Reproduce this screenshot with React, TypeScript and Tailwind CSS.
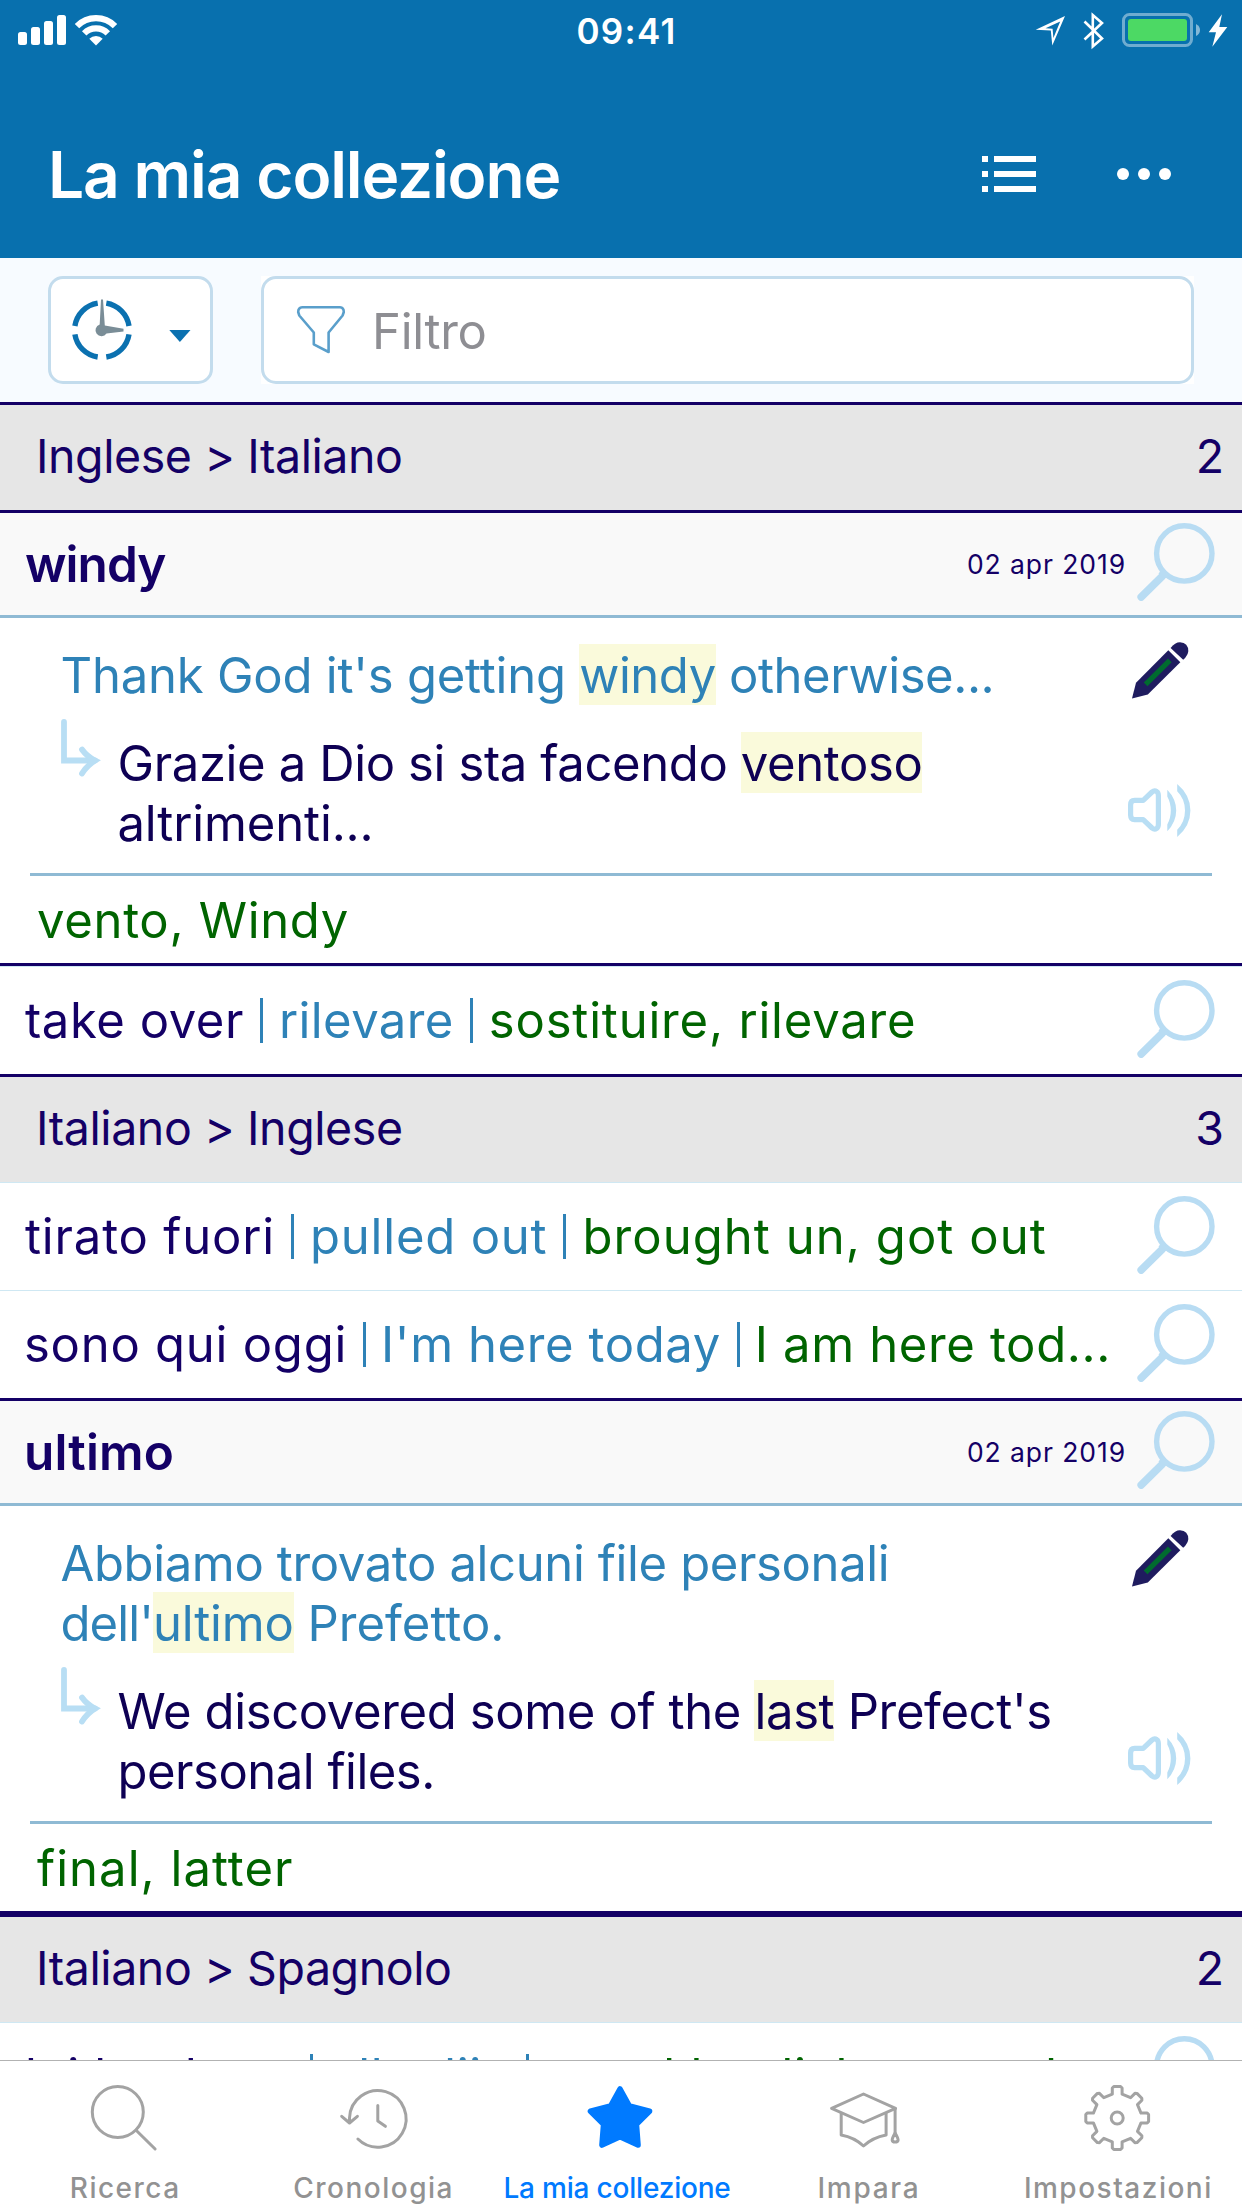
import type { ReactNode } from "react";

function StatusBar() {
  return (
    <div className="flex h-[62px] items-center text-white">
      <div className="flex-1">
        <svg className="ml-[15px] h-[62px] w-[110px]" viewBox="15 0 110 62" fill="#fff">
          <rect x="18" y="32" width="9" height="13" rx="2.5" />
          <rect x="31" y="27" width="9" height="18" rx="2.5" />
          <rect x="44" y="21" width="9" height="24" rx="2.5" />
          <rect x="57" y="15" width="9" height="30" rx="2.5" />
          <g fill="none" stroke="#fff" strokeWidth="6.2">
            <path d="M77 26.2 A26.6 26.6 0 0 1 115 26.2" />
            <path d="M84.2 33.4 A16.5 16.5 0 0 1 107.8 33.4" />
          </g>
          <path d="M89.3 38.7 A9.5 9.5 0 0 1 102.7 38.7 L96 45.4 Z" />
        </svg>
      </div>
      <div className="pl-[11px] text-[35px] leading-[60px] font-semibold tracking-[1.27px]">09:41</div>
      <div className="flex flex-1 justify-end">
        <svg className="mr-[10px] h-[62px] w-[200px]" viewBox="1032 0 200 62" fill="none">
          <path d="M1065 16 L1035.7 29.8 L1050.8 30.6 L1052.3 45.5 Z M1060.2 21.5 L1053.4 38 L1052.6 28.8 L1045.5 28.3 Z" fill="#fff" fillRule="evenodd" />
          <path d="M1084.5 21.5 L1102 38.5 L1092.8 46.5 V15 L1102 23 L1084.5 39.5" stroke="#fff" strokeWidth="2.6" />
          <rect x="1123.5" y="14.5" width="68" height="31" rx="6" stroke="#fff" strokeOpacity=".42" strokeWidth="3" />
          <rect x="1128" y="19" width="59" height="22" rx="3" fill="#4cd964" />
          <path d="M1196 24 Q1200 26 1200 30 Q1200 34 1196 36 Z" fill="#fff" fillOpacity=".5" />
          <path d="M1222 14.3 L1208.7 32.3 H1216 L1212.3 46.7 L1227.3 27 H1219.3 Z" fill="#fff" />
        </svg>
      </div>
    </div>
  );
}

function Header() {
  return (
    <header className="h-[258px] bg-[#0870ae]">
      <StatusBar />
      <div className="mt-[73px] flex h-[80px] items-center pl-[48px] text-white">
        <h1 className="flex-1 text-[64px] leading-[80px] font-semibold tracking-[-1.15px]">La mia collezione</h1>
        <svg className="mb-[2px] h-[36px] w-[54px]" viewBox="982 156 54 36" fill="#fff">
          <path d="M982 156h6v6h-6zM982 171h6v6h-6zM982 186h6v6h-6zM994 156h42v6h-42zM994 171h42v6h-42zM994 186h42v6h-42z" />
        </svg>
        <svg className="mr-[71px] mb-[2px] ml-[81px] h-[12px] w-[54px]" viewBox="0 0 54 12" fill="#fff">
          <circle cx="6" cy="6" r="6" />
          <circle cx="27" cy="6" r="6" />
          <circle cx="48" cy="6" r="6" />
        </svg>
      </div>
    </header>
  );
}

function FilterBar() {
  return (
    <div className="flex h-[144px] bg-[#f7fbff] pt-[18px] pl-[48px]">
      <div className="flex h-[108px] w-[165px] items-center rounded-[15px] border-[3px] border-[#c3dced] bg-white">
        <svg className="ml-[17px] h-[66px] w-[68px]" viewBox="68 297 68 66">
          <g fill="none" stroke="#0b71b0" strokeWidth="5.4">
            <path d="M74.9 326 A27.3 27.3 0 0 1 97.7 303.1" />
            <path d="M106.3 303.1 A27.3 27.3 0 0 1 129 326" />
            <path d="M129 334.3 A27.3 27.3 0 0 1 106.3 357" />
            <path d="M97.7 357 A27.3 27.3 0 0 1 74.9 334.3" />
          </g>
          <path d="M101 299.5 h2 l1.8 26 l18.7 3.2 v2.8 l-17 2 a6 6 0 1 1 -6.8 -9 Z" fill="#7a8d97" />
        </svg>
        <svg className="mt-[12px] ml-[33px] h-[12px] w-[22px]" viewBox="0 0 22 12">
          <path d="M0.3 0 H21.5 L10.9 12 Z" fill="#0b71b0" />
        </svg>
      </div>
      <div className="ml-[48px] h-[108px] w-[933px] bg-white">
        <div className="flex h-[108px] items-center rounded-[15px] border-[3px] border-[#c3dced]">
          <svg className="mb-px ml-[32px] h-[50px] w-[50px]" viewBox="296 304 50 50" fill="none" stroke="#5a9fcb" strokeWidth="2.6" strokeLinejoin="round">
            <path d="M302.3 306.2 H340 Q343.8 306.6 343.8 311 L342.6 314.5 L328.6 331.5 V351 L313.8 343.3 V331.5 L299.3 314.5 L298.2 311 Q298.2 306.6 302.3 306.2 Z" />
          </svg>
          <span className="mt-[3px] ml-[26px] text-[49px] leading-[60px] tracking-[-0.3px] text-[#8e8e93]">Filtro</span>
        </div>
      </div>
    </div>
  );
}

function Magnifier({ className }: { className?: string }) {
  return (
    <svg className={`h-[78px] w-[79px] shrink-0 ${className ?? ""}`} viewBox="0 0 79 78" fill="none" stroke="#b8dcf3">
      <circle cx="47.3" cy="30.4" r="27.7" strokeWidth="5.4" />
      <path d="M25 53.5 L4.2 74" strokeWidth="7.6" strokeLinecap="round" />
      <path d="M21.5 50.5 Q24 48 23.5 43.5 L33.5 54.5 Q29.5 53.5 27 56 Z" fill="#b8dcf3" stroke="none" />
    </svg>
  );
}

function SectionHeader({ label, count, className }: { label: string; count: number; className?: string }) {
  return (
    <div className={`flex items-center justify-between bg-[#e6e6e6] pr-[18px] pb-[3px] pl-[36px] text-[46.5px] leading-[102px] text-[#140066] ${className ?? ""}`}>
      <span className="tracking-[-0.42px]">{label}</span>
      <span>{count}</span>
    </div>
  );
}

function Mark({ children }: { children: ReactNode }) {
  return <mark className="bg-[#fafadb] pt-[2px] text-inherit">{children}</mark>;
}

function Entry({ word, wordClass, source, target, note, noteClass }: {
  word: string; wordClass: string; source: ReactNode; target: ReactNode; note: string; noteClass: string;
}) {
  return (
    <article>
      <div className="flex h-[105px] items-center border-b-[3px] border-[#8fbad4] bg-[#f9f9f9] pr-[26px] text-[#140066]">
        <span className={`flex-1 text-[49.5px] leading-[60px] font-semibold ${wordClass}`}>{word}</span>
        <span className="mt-px mr-[11px] text-[26.5px] tracking-[0.92px]">02 apr 2019</span>
        <Magnifier className="-mt-[4px]" />
      </div>
      <div className="mx-[30px] flex justify-between border-b-[3px] border-[#8fbad4]">
        <div className="pt-[28px] pb-[19px] pl-[30.5px] text-[49px] leading-[60px] whitespace-nowrap">
          <p className="text-[#2e82b7]">{source}</p>
          <div className="mt-[28px] flex text-[#0e0054]">
            <svg className="-mt-[15px] mr-[17px] h-[60px] w-[40px]" viewBox="61 718 40 60" fill="none" stroke="#b8def4" strokeWidth="5.8" strokeLinecap="round">
              <path d="M64 721 V759.5 H95" />
              <path d="M82 748.5 Q87 755.5 95 759.5 Q87 764.5 82 772.5" />
            </svg>
            <p>{target}</p>
          </div>
        </div>
        <div className="flex w-[86px] flex-col justify-between pt-[24px] pb-[35px]">
          <svg className="ml-[5.5px] h-[57px] w-[57px]" viewBox="0 0 57 57">
            <path d="M0 56.5 L4 40.8 L36.3 8.2 L48.3 20.3 L15.8 52.5 Z" fill="#1f1c5f" />
            <path d="M38.6 6 Q43 0.2 48 0.2 Q56.3 1 56.3 9 Q56 13.5 51.2 17.8 Z" fill="#1f1c5f" />
            <path d="M13.6 42.3 L37.8 18.3" stroke="#006b2f" strokeWidth="5.2" />
          </svg>
          <svg className="ml-[2px] h-[54px] w-[63px]" viewBox="0 0 63 54" fill="none" stroke="#b8def4" strokeWidth="5.2" strokeLinejoin="round">
            <path d="M6.5 16.4 H15.2 L24 8 Q26.5 5.9 28.6 7.6 Q30.4 8.6 30.4 12 V40 Q30.4 43.4 28.6 44.5 Q26.5 46 24 44 L15.2 35.6 H6.5 Q2.6 35.6 2.6 31 V21 Q2.6 16.4 6.5 16.4 Z" />
            <path d="M39.3 5.7 Q48.2 15 48.2 26.5 Q48.2 38 39.3 47.3 V40.5 Q42.8 34 42.8 26.5 Q42.8 19 39.3 12.5 Z" fill="#b8def4" stroke="none" />
            <path d="M49.2 0 Q62.4 11 62.4 26.5 Q62.4 42 49.2 53 V45.8 Q57 38 57 26.5 Q57 15 49.2 7.2 Z" fill="#b8def4" stroke="none" />
          </svg>
        </div>
      </div>
      <div className={`h-[87px] pl-[37px] text-[49px] leading-[89px] text-[#006400] ${noteClass}`}>{note}</div>
    </article>
  );
}

function Bar() {
  return <span className="mx-[16px] h-[45px] w-[3px] shrink-0 bg-[#2e82b7]" />;
}

type Cell = { text: string; className: string };

function PhraseRow({ cells }: { cells: [Cell, Cell, Cell] }) {
  const [phrase, first, second] = cells;
  return (
    <div className="flex h-[108px] items-center border-t border-[#cfe8f3] bg-white pr-[26px] pl-[25px] text-[49px] leading-[60px] whitespace-nowrap">
      <span className={`text-[#140066] ${phrase.className}`}>{phrase.text}</span>
      <Bar />
      <span className={`text-[#2e82b7] ${first.className}`}>{first.text}</span>
      <Bar />
      <span className={`flex-1 text-[#006400] ${second.className}`}>{second.text}</span>
      <Magnifier className="-mt-[4px]" />
    </div>
  );
}

function gearPath(cx: number, cy: number) {
  const tooth = [[-4.9, -23.8], [-4.9, -30], [-3.4, -31.4], [3.4, -31.4], [4.9, -30], [4.9, -23.8]];
  const points: string[] = [];
  for (let k = 0; k < 8; k++) {
    const a = (k * Math.PI) / 4;
    for (const [x, y] of tooth) {
      const px = cx + x * Math.cos(a) - y * Math.sin(a);
      const py = cy + x * Math.sin(a) + y * Math.cos(a);
      points.push(`${px.toFixed(2)} ${py.toFixed(2)}`);
    }
  }
  return `M${points.join("L")}Z`;
}

function Tab({ label, viewBox, className, children }: { label: string; viewBox: string; className: string; children: ReactNode }) {
  return (
    <div className="flex flex-1 flex-col items-center">
      <svg className="mt-[17px] h-[80px] w-[80px]" viewBox={viewBox} fill="none" stroke="#a3a3a3" strokeWidth="3" strokeLinecap="round" strokeLinejoin="round">
        {children}
      </svg>
      <span className={`mt-[10px] text-[28px] leading-[40px] font-medium whitespace-nowrap ${className}`}>{label}</span>
    </div>
  );
}

function TabBar() {
  return (
    <nav className="flex h-[148px] border-t border-[#b2b2b2] bg-white">
      <Tab label="Ricerca" viewBox="84.2 2078 80 80" className="ml-[2px] tracking-[1.5px] text-[#929292]">
        <circle cx="118" cy="2112" r="25.5" />
        <path d="M136.3 2130.2 L155.3 2149" />
      </Tab>
      <Tab label="Cronologia" viewBox="332.6 2078 80 80" className="ml-[2px] tracking-[1.5px] text-[#929292]">
        <path d="M357.5 2139 A28.3 28.3 0 1 0 349.1 2118 V2122" />
        <path d="M341.3 2116.3 L349.1 2123 L357 2116.3" />
        <path d="M377.4 2105.5 V2121 L385 2126.3" />
      </Tab>
      <Tab label="La mia collezione" viewBox="581 2078 80 80" className="mr-[8px] tracking-[-0.2px] text-[#007aff]">
        <path d="M620 2089 L629.4 2106 L649.5 2111.2 L636.4 2124.4 L638 2145 L620 2136.8 L602 2145 L603.6 2124.4 L590.5 2111.2 L610.6 2106 Z" fill="#007aff" stroke="#007aff" strokeWidth="5.6" />
      </Tab>
      <Tab label="Impara" viewBox="829.4 2078 80 80" className="mr-[1px] tracking-[1.7px] text-[#929292]">
        <path d="M863.9 2094 L896 2108.4 L863.9 2122.5 L832 2108.4 Z" />
        <path d="M841.6 2113.5 V2135 Q855 2137.5 863.9 2146 Q873 2137.5 886.5 2135 V2113.5" />
        <path d="M895.5 2109 V2133" />
        <path d="M895.5 2133 Q892.6 2138 892.6 2140 Q892.8 2142 895.5 2142 Q898.3 2142 898.5 2140 Q898.5 2138 895.5 2133 Z" />
      </Tab>
      <Tab label="Impostazioni" viewBox="1077.8 2078 80 80" className="ml-[1px] tracking-[1.5px] text-[#929292]">
        <path d={gearPath(1117, 2118)} />
        <circle cx="1117" cy="2118" r="6" />
      </Tab>
    </nav>
  );
}

export default function App() {
  return (
    <div className="flex h-[2208px] w-[1242px] flex-col overflow-hidden bg-white font-['Inter',sans-serif]">
      <Header />
      <FilterBar />
      <main className="min-h-0 flex-1 overflow-hidden">
        <SectionHeader label="Inglese > Italiano" count={2} className="border-y-[3px] border-[#140066]" />
        <Entry
          word="windy"
          wordClass="pl-[25px] tracking-[-0.95px]"
          source={
            <>
              <span className="tracking-[-0.22px]">Thank God it's getting </span>
              <span className="tracking-[-0.45px]"><Mark>windy</Mark> otherwise...</span>
            </>
          }
          target={
            <>
              <span className="tracking-[-0.38px]">Grazie a Dio si sta facendo <Mark>ventoso</Mark></span>
              <br />
              <span className="tracking-[-0.14px]">altrimenti...</span>
            </>
          }
          note="vento, Windy"
          noteClass="tracking-[0.68px]"
        />
        <div className="border-y-[3px] border-[#140066]">
          <PhraseRow
            cells={[
              { text: "take over", className: "tracking-[0.55px]" },
              { text: "rilevare", className: "tracking-[0.42px]" },
              { text: "sostituire, rilevare", className: "tracking-[0.8px]" },
            ]}
          />
        </div>
        <SectionHeader label="Italiano > Inglese" count={3} />
        <PhraseRow
          cells={[
            { text: "tirato fuori", className: "tracking-[0.82px]" },
            { text: "pulled out", className: "tracking-[0.8px]" },
            { text: "brought un, got out", className: "tracking-[1.06px]" },
          ]}
        />
        <PhraseRow
          cells={[
            { text: "sono qui oggi", className: "-ml-px tracking-[0.75px]" },
            { text: "I'm here today", className: "-ml-px tracking-[0.6px]" },
            { text: "I am here tod...", className: "-ml-px tracking-[0.64px]" },
          ]}
        />
        <div className="border-t-[3px] border-[#140066]">
          <Entry
            word="ultimo"
            wordClass="pl-[24px] tracking-[0.15px]"
            source={
              <>
                <span className="tracking-[-0.37px]">Abbiamo trovato alcuni file personali</span>
                <br />
                <span className="tracking-[-0.9px]">dell'</span>
                <span className="tracking-[-0.2px]"><Mark>ultimo</Mark></span>
                <span className="tracking-[0.05px]"> Prefetto.</span>
              </>
            }
            target={
              <>
                <span className="tracking-[-0.37px]">We discovered some of the <Mark>last</Mark> Prefect's</span>
                <br />
                <span className="tracking-[-0.5px]">personal files.</span>
              </>
            }
            note="final, latter"
            noteClass="tracking-[1.04px]"
          />
        </div>
        <SectionHeader label="Italiano > Spagnolo" count={2} className="border-t-[6px] border-[#140066]" />
        <PhraseRow
          cells={[
            { text: "lui ha detto", className: "w-[269px] tracking-[0.7px]" },
            { text: "ella dijo", className: "w-[181px] tracking-[0.7px]" },
            { text: "aquel ha dicho, usted...", className: "tracking-[0.8px]" },
          ]}
        />
      </main>
      <TabBar />
    </div>
  );
}
